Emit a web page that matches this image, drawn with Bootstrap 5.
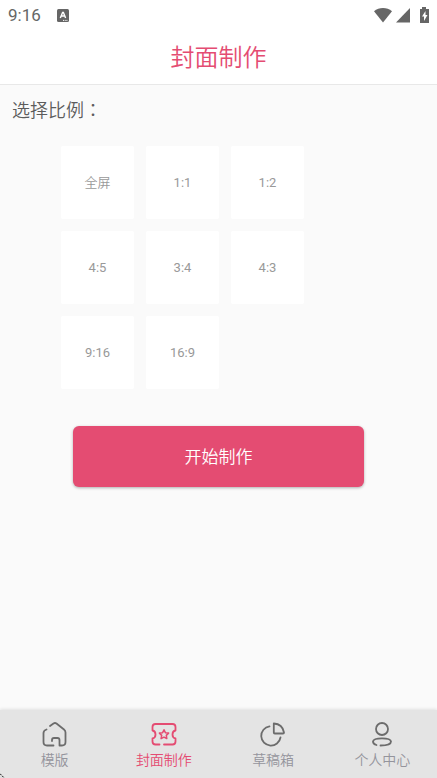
<!DOCTYPE html>
<html lang="zh-CN">
<head>
<meta charset="utf-8">
<meta name="viewport" content="width=device-width, initial-scale=1">
<title>封面制作</title>
<link href="https://cdn.jsdelivr.net/npm/bootstrap@5.3.0/dist/css/bootstrap.min.css" rel="stylesheet">
<style>
:root { --pink: #e44c72; }
body { font-family: Roboto, "Noto Sans CJK SC", sans-serif; font-weight: 350; background: #fafafa; color: #5c5c5c; }
.status-bar { height: 30px; padding: 0 6px 0 8px; font-size: 17px; line-height: 30px; font-weight: 400; color: #666; }
.app-head { border-bottom: 1px solid #e8e8e8; }
.app-title { font-size: 24px; line-height: 52px; padding-top: 2px; font-weight: 350; color: var(--pink); }
.ratio-label { font-size: 18px; line-height: 26px; font-weight: 350; padding: 13px 12px 0; }
.ratio-label .colon { font-family: "Noto Sans CJK TC", sans-serif; line-height: 1; }
.ratio-grid { display: grid; grid-template-columns: repeat(3, 73px); gap: 12px; padding: 22px 0 0 61px; }
.ratio-btn { aspect-ratio: 1; background: #fff; border: 0; border-radius: 2px; color: #999; font-size: 13px; font-weight: 400; padding: 0; }
.ratio-btn:lang(zh-Hans) { font-weight: 350; }
.start-wrap { padding: 37px 73px 0; }
.start-btn, .start-btn:hover { height: 61px; background: var(--pink); color: #fff; border: 0; border-radius: 6px; font-size: 17px; font-weight: 350; padding: 8px 12px 6px; box-shadow: 0 1px 3px rgba(0,0,0,.3); }
.tab-bar { background: #e4e4e4; box-shadow: 0 -1px 3px rgba(0,0,0,.1); padding: 10px 0 7px; }
.tab-link { color: #94949c; font-size: 14px; line-height: 22px; }
.tab-link svg { display: block; margin-bottom: 1px; color: #6c6c6c; }
.tab-link.current, .tab-link.current svg { color: var(--pink); }
.corner { left: 0; bottom: 0; }
</style>
<script src="https://cdn.jsdelivr.net/npm/bootstrap@5.3.0/dist/js/bootstrap.bundle.min.js"></script>
</head>
<body class="d-flex flex-column min-vh-100">
<header class="app-head bg-white">
  <div class="status-bar d-flex align-items-center">
    <span>9:16</span>
    <svg class="ms-3" width="12" height="13" viewBox="0 0 12 13" aria-hidden="true"><rect width="12" height="13" rx="1.5" fill="#666"/><path d="M3.300 9 5.600 3.500h.8L8.600 9M4.200 7h3.600" fill="none" stroke="#fff" stroke-width="1.400"/><path d="M6 11.400h4.500" stroke="#fff" stroke-dasharray="1 .7"/></svg>
    <svg class="ms-auto" width="18" height="16" viewBox="0 0 18 16" aria-hidden="true"><path d="M0 4.200C5-.2 13-.2 18 4.200L9 15.500z" fill="#666"/></svg>
    <svg class="ms-1" width="14" height="16" viewBox="0 0 14 16" aria-hidden="true"><path d="M0 15.500 14 1v14.500z" fill="#666"/></svg>
    <svg class="ms-2" width="13" height="16" viewBox="0 0 13 16" aria-hidden="true"><path d="M4 0h4v2h3v14H2V2h2z" fill="#666"/><path d="M7.500 4 4 9.500h2V14l3.500-6H7.500z" fill="#fff"/></svg>
  </div>
  <h1 class="app-title text-center mb-0">封面制作</h1>
</header>
<main class="flex-grow-1">
  <h2 class="ratio-label mb-0" id="ratio-label">选择比例<span class="colon" lang="zh-TW">：</span></h2>
  <div class="ratio-grid" role="group" aria-labelledby="ratio-label">
    <button type="button" class="ratio-btn" lang="zh-Hans">全屏</button>
    <button type="button" class="ratio-btn">1:1</button>
    <button type="button" class="ratio-btn">1:2</button>
    <button type="button" class="ratio-btn">4:5</button>
    <button type="button" class="ratio-btn">3:4</button>
    <button type="button" class="ratio-btn">4:3</button>
    <button type="button" class="ratio-btn">9:16</button>
    <button type="button" class="ratio-btn">16:9</button>
  </div>
  <div class="start-wrap"><button type="button" class="btn start-btn w-100">开始制作</button></div>
</main>
<nav class="tab-bar position-relative d-flex" aria-label="主导航">
  <a href="#" class="tab-link col-3 d-flex flex-column align-items-center text-decoration-none">
    <svg width="28" height="28" viewBox="0 0 28 28" fill="none" stroke="currentColor" stroke-width="1.800" stroke-linecap="round" stroke-linejoin="round" aria-hidden="true"><path d="M5.500 9.500Q2.500 10.500 2.500 13v9q0 3.500 3.500 3.500H12.500M9 6l3.500-2.500q1.500-1 3 0l7.500 6q1.500 1.200 1.500 3V22q0 3.500-3.500 3.500H18.500V20q0-2-2-2h-3.500q-2 0-2 2v1"/></svg>
    <span>模版</span></a>
  <a href="#" class="tab-link current col-3 d-flex flex-column align-items-center text-decoration-none" aria-current="page">
    <svg width="28" height="28" viewBox="0 0 28 28" fill="none" stroke="currentColor" stroke-width="1.800" stroke-linecap="round" stroke-linejoin="round" aria-hidden="true"><path d="M9.500 24.500H5.500Q2.500 24.500 2.500 21.500v-3q3-.5 3-4t-3-4V7q0-3 3-3h17q3 0 3 3v3.500q-3 .5-3 4t3 4V21.500q0 3-3 3H14"/><path stroke-width="1.500" d="m14 9.800 1.400 2.900 3.200.4-2.300 2.300.5 3.200-2.800-1.500-2.900 1.500.6-3.200-2.300-2.300 3.200-.4z"/></svg>
    <span>封面制作</span></a>
  <a href="#" class="tab-link col-3 d-flex flex-column align-items-center text-decoration-none">
    <svg width="28" height="28" viewBox="0 0 28 28" fill="none" stroke="currentColor" stroke-width="1.800" stroke-linecap="round" stroke-linejoin="round" aria-hidden="true"><path d="M10.500 6.300A9.700 9.700 0 1 0 21.500 17.500M14.800 3.500Q23.500 4 25 12.500q0 1-1 1H15.800q-1 0-1-1z"/></svg>
    <span>草稿箱</span></a>
  <a href="#" class="tab-link col-3 d-flex flex-column align-items-center text-decoration-none">
    <svg width="28" height="28" viewBox="0 0 28 28" fill="none" stroke="currentColor" stroke-width="1.800" stroke-linecap="round" stroke-linejoin="round" aria-hidden="true"><circle cx="14" cy="9" r="6"/><path d="M8.500 25Q5 24 5 21.500 5.500 18.300 14 18.300T23 21.500Q23 25.500 12.500 25.500"/></svg>
    <span>个人中心</span></a>
  <svg class="corner position-absolute" width="5" height="5" viewBox="0 0 5 5" aria-hidden="true"><path d="M0 1 4 5H0z" fill="#ddd"/><path d="M0 .7 4.300 5" stroke="#111" stroke-dasharray="2 1"/></svg>
</nav>
</body>
</html>
